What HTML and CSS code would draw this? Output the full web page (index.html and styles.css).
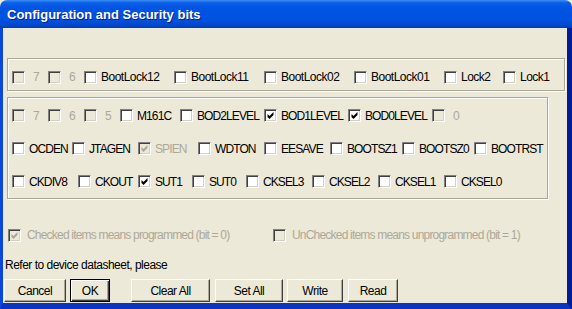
FILE: index.html
```html
<!DOCTYPE html>
<html lang="en">

<head>
    <title>Configuration and Security bits</title>
    <meta charset="UTF-8">
    <link rel="stylesheet" href="styles.css">
</head>

<body>
    <div class="window">
        <div class="titlebar">Configuration and Security bits</div>
        <div class="client">
            <div class="group group-lock">
                <div class="row">
                    <label class="cb w36 num off"><span class="box"></span><span>7</span></label>
                    <label class="cb w36 num off"><span class="box"></span><span>6</span></label>
                    <label class="cb w90"><span class="box"></span><span>BootLock12</span></label>
                    <label class="cb w90"><span class="box"></span><span>BootLock11</span></label>
                    <label class="cb w90"><span class="box"></span><span>BootLock02</span></label>
                    <label class="cb w90"><span class="box"></span><span>BootLock01</span></label>
                    <label class="cb w59"><span class="box"></span><span>Lock2</span></label>
                    <label class="cb"><span class="box"></span><span>Lock1</span></label>
                </div>
            </div>
            <div class="group group-fuse">
                <div class="row">
                    <label class="cb w36 num off"><span class="box"></span><span>7</span></label>
                    <label class="cb w36 num off"><span class="box"></span><span>6</span></label>
                    <label class="cb w36 num off"><span class="box"></span><span>5</span></label>
                    <label class="cb w60"><span class="box"></span><span>M161C</span></label>
                    <label class="cb w84"><span class="box"></span><span>BOD2LEVEL</span></label>
                    <label class="cb w84"><span class="box"><svg viewBox="-0.5 0 9 9"><polygon points="1,3 3,5 7,1 7,4 3,8 1,6" /></svg></span><span>BOD1LEVEL</span></label>
                    <label class="cb w84"><span class="box"><svg viewBox="-0.5 0 9 9"><polygon points="1,3 3,5 7,1 7,4 3,8 1,6" /></svg></span><span>BOD0LEVEL</span></label>
                    <label class="cb num off"><span class="box"></span><span>0</span></label>
                </div>
                <div class="row">
                    <label class="cb w60"><span class="box"></span><span>OCDEN</span></label>
                    <label class="cb w66"><span class="box"></span><span>JTAGEN</span></label>
                    <label class="cb w60 off"><span class="box"><svg viewBox="-0.5 0 9 9"><polygon points="1,3 3,5 7,1 7,4 3,8 1,6" /></svg></span><span>SPIEN</span></label>
                    <label class="cb w66"><span class="box"></span><span>WDTON</span></label>
                    <label class="cb w66"><span class="box"></span><span>EESAVE</span></label>
                    <label class="cb w72"><span class="box"></span><span>BOOTSZ1</span></label>
                    <label class="cb w72"><span class="box"></span><span>BOOTSZ0</span></label>
                    <label class="cb"><span class="box"></span><span>BOOTRST</span></label>
                </div>
                <div class="row">
                    <label class="cb w66"><span class="box"></span><span>CKDIV8</span></label>
                    <label class="cb w60"><span class="box"></span><span>CKOUT</span></label>
                    <label class="cb w54"><span class="box"><svg viewBox="-0.5 0 9 9"><polygon points="1,3 3,5 7,1 7,4 3,8 1,6" /></svg></span><span>SUT1</span></label>
                    <label class="cb w54"><span class="box"></span><span>SUT0</span></label>
                    <label class="cb w66"><span class="box"></span><span>CKSEL3</span></label>
                    <label class="cb w66"><span class="box"></span><span>CKSEL2</span></label>
                    <label class="cb w66"><span class="box"></span><span>CKSEL1</span></label>
                    <label class="cb"><span class="box"></span><span>CKSEL0</span></label>
                </div>
            </div>
            <div class="legend">
                <label class="cb legend-on off"><span class="box"><svg viewBox="-0.5 0 9 9"><polygon points="1,3 3,5 7,1 7,4 3,8 1,6" /></svg></span><span>Checked items means programmed (bit = 0)</span></label>
                <label class="cb off"><span class="box"></span><span>UnChecked items means unprogrammed (bit = 1)</span></label>
            </div>
            <div class="note">Refer to device datasheet, please</div>
            <div class="buttons">
                <button class="btn btn-cancel">Cancel</button>
                <button class="btn btn-ok">OK</button>
                <button class="btn btn-clear">Clear All</button>
                <button class="btn btn-set">Set All</button>
                <button class="btn btn-write">Write</button>
                <button class="btn btn-read">Read</button>
            </div>
        </div>
    </div>
</body>

</html>
```

FILE: styles.css
```css
body {
    margin: 0;
    background: #ECE9D8;
    color: black;
    font-family: 'Liberation Sans', Arial, sans-serif;
    font-size: 12px;
    letter-spacing: -0.5px;
}

.window {
    width: 572px;
    height: 309px;
    display: flex;
    flex-direction: column;
    overflow: hidden;
}

/* Title bar */
.titlebar {
    flex: none;
    height: 28px;
    display: flex;
    align-items: center;
    padding-left: 7px;
    color: #fff;
    font-weight: bold;
    font-size: 13px;
    letter-spacing: 0;
    text-shadow: 1px 1px #0a1e8c;
    border-radius: 7px 7px 0 0;
    background: linear-gradient(#3d8ef5 0, #0a5fe6 10%, #0054e3 30%, #0052e0 70%, #0049d0 88%, #003cb8 100%);
}

.client {
    flex: 1;
    box-sizing: border-box;
    border-left: 3px solid #0b47d9;
    border-right: 5px solid #001c98;
    border-bottom: 6px solid #0a34c4;
    background: #ECE9D8;
}

/* Group boxes */
.group {
    box-sizing: border-box;
    margin-left: 4px;
    border: 1px solid #aca899;
    box-shadow: inset 1px 1px #fff, 1px 1px #fff;
}

.group-lock {
    margin-top: 30px;
    width: 558px;
    height: 33px;
    padding-top: 5px;
}

.group-fuse {
    margin-top: 6px;
    width: 541px;
    height: 102px;
    padding-top: 1px;
    letter-spacing: -0.9px;
}

.row {
    display: flex;
    align-items: center;
    padding-left: 4px;
}

.group-lock .row {
    height: 26px;
}

.group-fuse .row {
    height: 33px;
}

/* Check boxes */
.cb {
    display: flex;
    align-items: center;
    flex: none;
    white-space: nowrap;
}

.w36 { width: 36px; }
.w54 { width: 54px; }
.w59 { width: 59px; }
.w60 { width: 60px; }
.w66 { width: 66px; }
.w72 { width: 72px; }
.w84 { width: 84px; }
.w90 { width: 90px; }

.box {
    flex: none;
    width: 13px;
    height: 13px;
    box-sizing: border-box;
    margin-right: 4px;
    display: flex;
    align-items: center;
    justify-content: center;
    background: #fff;
    border: 1px solid;
    border-color: #808080 #fff #fff #808080;
    box-shadow: inset 1px 1px #404040, inset -1px -1px #d4d0c8;
}

.box svg {
    width: 9px;
    height: 9px;
    fill: #000;
}

.num .box {
    margin-right: 8px;
}

.off {
    color: #aca899;
}

.off .box {
    background: #ECE9D8;
}

.off .box svg {
    fill: #aca899;
}

/* Legend and note */
.legend {
    display: flex;
    align-items: center;
    height: 16px;
    margin-top: 28px;
    padding-left: 5px;
    letter-spacing: -0.8px;
}

.legend .box {
    margin-right: 6px;
}

.legend-on {
    width: 265px;
}

.note {
    height: 16px;
    line-height: 16px;
    margin-top: 14px;
    padding-left: 2px;
}

/* Buttons */
.buttons {
    display: flex;
    margin-top: 6px;
    padding-left: 1px;
}

.btn {
    height: 23px;
    padding: 0;
    font-family: inherit;
    font-size: 12px;
    letter-spacing: -0.5px;
    color: #000;
    background: #ECE9D8;
    border: 1px solid;
    border-color: #fff #404040 #404040 #fff;
    box-shadow: inset -1px -1px #aca899;
}

.btn-cancel { width: 62px; }
.btn-ok { width: 40px; margin-left: 4px; border-color: #000; box-shadow: inset 1px 1px #fff, inset -1px -1px #404040, inset -2px -2px #aca899; }
.btn-clear { width: 79px; margin-left: 21px; }
.btn-set { width: 68px; margin-left: 5px; }
.btn-write { width: 56px; margin-left: 4px; }
.btn-read { width: 50px; margin-left: 5px; }
```
